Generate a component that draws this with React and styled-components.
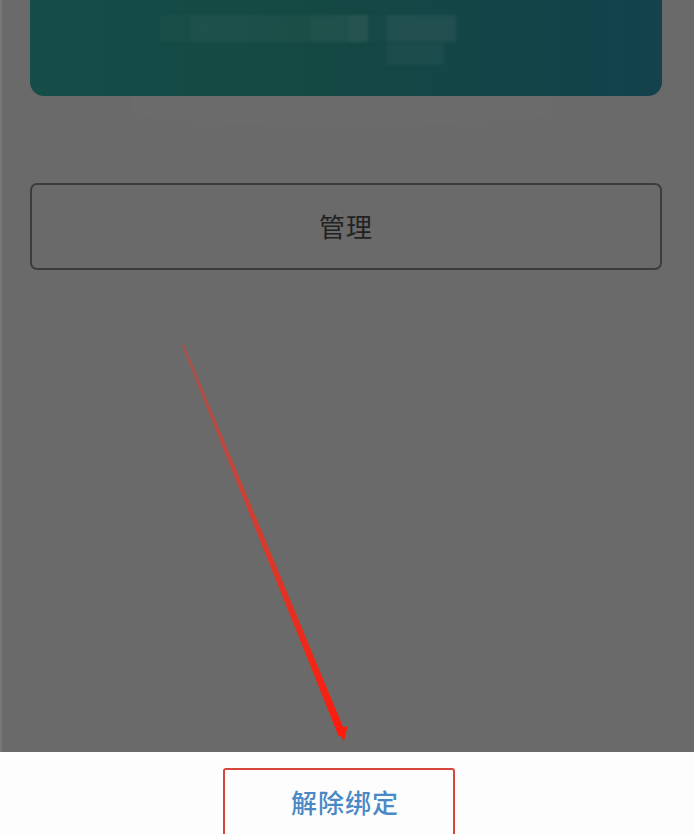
import React from "react";
import styled, { createGlobalStyle } from "styled-components";

const Global = createGlobalStyle`
  html, body { margin: 0; padding: 0; background: #ffffff; }
  body { font-family: "Noto Sans CJK SC", "Noto Sans", sans-serif; }
  #root { width: 694px; height: 834px; overflow: hidden; }
`;

const Page = styled.div`
  position: relative;
  width: 694px;
  height: 834px;
  display: flex;
  flex-direction: column;
  overflow: hidden;
`;

const Dimmed = styled.div`
  position: relative;
  height: 752px;
  background: #6a6a6a;
  border-left: 2px solid #787878;
  box-sizing: border-box;
  padding: 0 32px 0 28px;
  display: flex;
  flex-direction: column;
  &::after {
    content: "";
    position: absolute;
    left: 130px;
    top: 96px;
    width: 420px;
    height: 30px;
    border-radius: 0 0 50% 50%;
    background: rgba(255, 255, 255, 0.012);
  }
`;

const Card = styled.div`
  height: 96px;
  border-radius: 0 0 14px 14px;
  background: linear-gradient(90deg, #154d48 0%, #144843 45%, #13424c 100%);
  flex-shrink: 0;
  box-sizing: border-box;
  padding: 15px 0 0 130px;
  display: flex;
  flex-direction: column;
  gap: 1px;
`;

const BlurRow = styled.div`
  display: flex;
  padding-left: ${(p) => p.$indent ?? 0}px;
`;

const Blur = styled.div`
  width: ${(p) => p.$w}px;
  height: ${(p) => p.$h}px;
  background: rgba(90, 120, 115, ${(p) => p.$o ?? 0.18});
  filter: blur(1.5px);
`;

const ManageButton = styled.div`
  margin-top: 87px;
  height: 87px;
  box-sizing: border-box;
  border: 2px solid #3c3c3c;
  border-radius: 7px;
  padding-bottom: 3px;
  display: flex;
  align-items: center;
  justify-content: center;
  font-size: 26px;
  color: #222222;
  letter-spacing: 1px;
`;

const Bottom = styled.div`
  flex: 1;
  background: #fdfdfd;
  display: flex;
  justify-content: center;
  padding: 16px 16px 0 0;
  box-sizing: border-box;
  overflow: hidden;
`;

const UnbindBox = styled.div`
  width: 232px;
  height: 80px;
  box-sizing: border-box;
  border: 2px solid #d6463f;
  border-radius: 3px;
  display: flex;
  justify-content: center;
  padding: 13px 0 0 12px;
  font-size: 26px;
  font-weight: 500;
  color: #4a89c6;
  letter-spacing: 1px;
`;

const Overlay = styled.svg`
  position: absolute;
  left: 0;
  top: 0;
  pointer-events: none;
`;

export default function App() {
  return (
    <>
      <Global />
      <Page>
        <Dimmed>
          <Card>
            <BlurRow>
              <Blur $w={30} $h={27} $o={0.06} />
              <Blur $w={60} $h={27} $o={0.16} />
              <Blur $w={60} $h={27} $o={0.12} />
              <Blur $w={38} $h={27} $o={0.18} />
              <Blur $w={20} $h={27} $o={0.26} />
              <Blur $w={18} $h={27} $o={0.05} />
              <Blur $w={70} $h={27} $o={0.2} />
            </BlurRow>
            <BlurRow $indent={226}>
              <Blur $w={58} $h={22} $o={0.12} />
            </BlurRow>
          </Card>
          <ManageButton>管理</ManageButton>
        </Dimmed>
        <Bottom>
          <UnbindBox>解除绑定</UnbindBox>
        </Bottom>
        <Overlay width="694" height="834" viewBox="0 0 694 834">
          <defs>
            <linearGradient id="ar" x1="183" y1="345" x2="343" y2="740" gradientUnits="userSpaceOnUse">
              <stop offset="0" stopColor="#b24e46" stopOpacity="0.8" />
              <stop offset="0.5" stopColor="#d83a2c" />
              <stop offset="1" stopColor="#ff1a0a" />
            </linearGradient>
          </defs>
          <polygon points="181.8,345.5 184.2,344.5 345.5,733 338.5,736" fill="url(#ar)" />
          <polygon points="336,730 347.5,726 344,741" fill="#ff1a0a" />
        </Overlay>
      </Page>
    </>
  );
}
